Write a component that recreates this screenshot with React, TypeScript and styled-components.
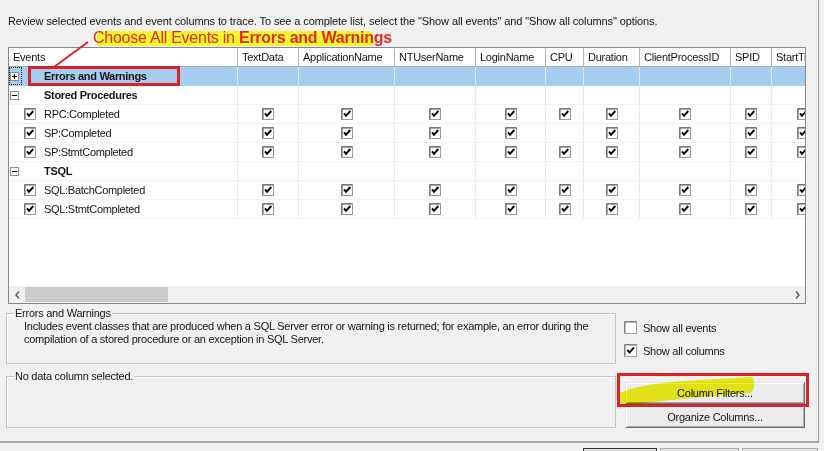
import React from 'react';
import styled, { createGlobalStyle } from 'styled-components';

const Global = createGlobalStyle`
  html, body { margin: 0; padding: 0; background: #f0f0f0; }
  body { font-family: "Liberation Sans", Arial, sans-serif; }
`;

const COLS = '229px 61px 96px 81px 70px 38px 56px 91px 41px 62px';

const Root = styled.div`
  position: relative;
  width: 824px;
  height: 451px;
  overflow: hidden;
  background: #f0f0f0;
  font-family: "Liberation Sans", Arial, sans-serif;
  font-size: 11px;
  letter-spacing: -0.25px;
  color: #141414;
`;

const Panel = styled.div`
  box-sizing: border-box;
  width: 819px;
  height: 443px;
  padding: 15px 0 0 8px;
  border-right: 1px solid #9c9c9c;
  border-bottom: 2px solid #a4a4a4;
  display: flex;
  flex-direction: column;
`;

const Intro = styled.div`
  height: 13px;
  line-height: 13px;
  white-space: nowrap;
  letter-spacing: -0.1px;
`;

const GridFrame = styled.div`
  margin-top: 19px;
  box-sizing: border-box;
  width: 798px;
  height: 257px;
  border: 1px solid #828790;
  background: #fff;
  display: flex;
  flex-direction: column;
  overflow: hidden;
  flex: none;
`;

const HeaderRow = styled.div`
  flex: none;
  display: grid;
  grid-template-columns: ${COLS};
  height: 19px;
  box-sizing: border-box;
  border-bottom: 1px solid #a9a9a9;
`;

const HeaderCell = styled.div`
  border-right: 1px solid #b4b4b4;
  padding-left: 4px;
  line-height: 18px;
  white-space: nowrap;
  overflow: hidden;
  background: #fff;
`;

const Body = styled.div`
  flex: 1;
  overflow: hidden;
`;

const Row = styled.div<{ $selected?: boolean }>`
  display: grid;
  grid-template-columns: ${COLS};
  height: 19px;
  box-sizing: border-box;
  border-bottom: 1px solid ${p => (p.$selected ? '#a5cdf0' : '#f1f1f1')};
  background: ${p => (p.$selected ? '#a5cdf0' : '#fff')};
`;

const Cell = styled.div<{ $center?: boolean }>`
  border-right: 1px solid #e8e8e8;
  display: flex;
  align-items: center;
  justify-content: ${p => (p.$center ? 'center' : 'flex-start')};
  overflow: hidden;
  white-space: nowrap;
`;

const Expander = styled.span<{ $focused?: boolean }>`
  flex: none;
  box-sizing: border-box;
  width: 13px;
  height: 18px;
  display: flex;
  align-items: center;
  border: 1px dotted ${p => (p.$focused ? '#222' : 'transparent')};
`;

const CheckSlot = styled.span`
  flex: none;
  display: flex;
  margin-left: 2px;
  width: 12px;
`;

const GroupGap = styled.span`
  flex: none;
  width: 22px;
`;

const EventLabel = styled.span<{ $bold?: boolean }>`
  margin-left: ${p => (p.$bold ? '0' : '8px')};
  font-weight: ${p => (p.$bold ? 700 : 400)};
  letter-spacing: -0.3px;
`;

const HScroll = styled.div`
  flex: none;
  height: 17px;
  display: flex;
  background: #f0f0f0;
`;

const ScrollArrow = styled.div`
  flex: none;
  width: 16px;
  height: 17px;
  display: flex;
  align-items: center;
  justify-content: center;
`;

const Track = styled.div`
  flex: 1;
  display: flex;
  align-items: center;
`;

const Thumb = styled.div<{ $w: number }>`
  width: ${p => p.$w}px;
  height: 15px;
  background: #cdcdcd;
`;

const Bottom = styled.div`
  display: grid;
  grid-template-columns: 610px 180px;
  column-gap: 9px;
  margin-left: -2px;
  margin-top: 3px;
`;

const LeftCol = styled.div`
  display: flex;
  flex-direction: column;
  gap: 6px;
`;

const Group = styled.fieldset<{ $h: number }>`
  margin: 0;
  min-width: 0;
  box-sizing: border-box;
  height: ${p => p.$h}px;
  border: 1px solid #c3c3c3;
  box-shadow: inset 1px 1px 0 #fff;
  padding: 0 6px 0 7px;
`;

const GroupTitle = styled.legend`
  padding: 0 1px;
  line-height: 13px;
`;

const Description = styled.div`
  margin-left: 10px;
  line-height: 13px;
  white-space: nowrap;
`;

const RightCol = styled.div`
  display: flex;
  flex-direction: column;
`;

const Option = styled.label<{ $top: number }>`
  display: flex;
  align-items: center;
  gap: 6px;
  height: 13px;
  margin-left: -1px;
  margin-top: ${p => p.$top}px;
`;

const Button = styled.button<{ $top: number }>`
  box-sizing: border-box;
  width: 180px;
  height: 22px;
  margin: ${p => p.$top}px 0 0 0;
  padding: 0;
  font-family: "Liberation Sans", Arial, sans-serif;
  font-size: 11px;
  letter-spacing: -0.25px;
  color: #141414;
  background: #ececec;
  border: 1px solid;
  border-color: #e4e4e4 #6f6f6f #6f6f6f #e4e4e4;
  box-shadow: inset 1px 1px 0 #fff, inset -1px -1px 0 #a9a9a9;
`;

const Footer = styled.div`
  display: flex;
  justify-content: flex-end;
  gap: 3px;
  padding: 5px 6px 0 0;
`;

const FooterButton = styled.div<{ $w: number; $default?: boolean }>`
  box-sizing: border-box;
  width: ${p => p.$w}px;
  height: 23px;
  background: #e1e1e1;
  border: 1px solid ${p => (p.$default ? '#333' : '#adadad')};
`;

const Callout = styled.div`
  position: absolute;
  z-index: 1;
  left: 93px;
  top: 29px;
  font-size: 16px;
  line-height: 18px;
  letter-spacing: -0.25px;
  color: #e22b1f;
  white-space: nowrap;
`;

const Highlight = styled.span`
  position: absolute;
  left: 4px;
  top: 2px;
  width: 277px;
  height: 15px;
  border-radius: 3px 6px 4px 2px;
  background: #f5f52c;
  z-index: -1;
`;

const CalloutText = styled.span`
  position: relative;
`;

const Strong = styled.b`
  font-weight: 700;
`;

const RedBox = styled.div<{ $x: number; $y: number; $w: number; $h: number; $b: number }>`
  position: absolute;
  z-index: 2;
  left: ${p => p.$x}px;
  top: ${p => p.$y}px;
  width: ${p => p.$w}px;
  height: ${p => p.$h}px;
  box-sizing: border-box;
  border: ${p => p.$b}px solid #dc2229;
  pointer-events: none;
`;

const Pointer = styled.svg`
  position: absolute;
  left: 52px;
  top: 40px;
  pointer-events: none;
  z-index: 2;
`;

const Marker = styled.svg`
  position: absolute;
  left: 612px;
  top: 372px;
  pointer-events: none;
  mix-blend-mode: multiply;
`;

const Check = ({ checked = true }: { checked?: boolean }) => (
  <svg width="12" height="12" viewBox="0 0 12 12">
    <rect x="0.5" y="0.5" width="11" height="11" fill="#fff" stroke="#9a9a9a" />
    <path d="M1 11 V1 H11" fill="none" stroke="#555" />
    {checked && <path d="M3 5.3 L5 7.8 L9.3 3" fill="none" stroke="#000" strokeWidth="1.9" />}
  </svg>
);

const BigCheck = ({ checked }: { checked: boolean }) => (
  <svg width="13" height="13" viewBox="0 0 13 13">
    <rect x="0.5" y="0.5" width="12" height="12" fill="#fff" stroke="#a0a0a0" />
    <path d="M1 12 V1 H12" fill="none" stroke="#6a6a6a" />
    {checked && <path d="M3.3 5.8 L5.5 8.5 L10 3.3" fill="none" stroke="#000" strokeWidth="1.9" />}
  </svg>
);

const ExpandBox = ({ open }: { open: boolean }) => (
  <svg width="9" height="9" viewBox="0 0 9 9">
    <rect x="0.5" y="0.5" width="8" height="8" fill="#fff" stroke="#8c8c8c" />
    <path d="M2 4.5 H7" stroke="#000" />
    {!open && <path d="M4.5 2 V7" stroke="#000" />}
  </svg>
);

const columns = ['Events', 'TextData', 'ApplicationName', 'NTUserName', 'LoginName', 'CPU', 'Duration', 'ClientProcessID', 'SPID', 'StartTime'];

type RowData =
  | { kind: 'group'; label: string; open: boolean; selected?: boolean }
  | { kind: 'event'; label: string; checks: boolean[] };

const all = [true, true, true, true, true, true, true, true, true];

const rows: RowData[] = [
  { kind: 'group', label: 'Errors and Warnings', open: false, selected: true },
  { kind: 'group', label: 'Stored Procedures', open: true },
  { kind: 'event', label: 'RPC:Completed', checks: all },
  { kind: 'event', label: 'SP:Completed', checks: [true, true, true, true, false, true, true, true, true] },
  { kind: 'event', label: 'SP:StmtCompleted', checks: all },
  { kind: 'group', label: 'TSQL', open: true },
  { kind: 'event', label: 'SQL:BatchCompleted', checks: all },
  { kind: 'event', label: 'SQL:StmtCompleted', checks: all },
];

export default function App() {
  return (
    <Root>
      <Global />
      <Panel>
        <Intro>
          Review selected events and event columns to trace. To see a complete list, select the "Show all events" and "Show all columns" options.
        </Intro>
        <GridFrame>
          <HeaderRow>
            {columns.map(c => (
              <HeaderCell key={c}>{c}</HeaderCell>
            ))}
          </HeaderRow>
          <Body>
            {rows.map((r, i) =>
              r.kind === 'group' ? (
                <Row key={i} $selected={r.selected}>
                  <Cell>
                    <Expander $focused={r.selected}>
                      <ExpandBox open={r.open} />
                    </Expander>
                    <GroupGap />
                    <EventLabel $bold>{r.label}</EventLabel>
                  </Cell>
                  {columns.slice(1).map(c => (
                    <Cell key={c} />
                  ))}
                </Row>
              ) : (
                <Row key={i}>
                  <Cell>
                    <Expander />
                    <CheckSlot>
                      <Check />
                    </CheckSlot>
                    <EventLabel>{r.label}</EventLabel>
                  </Cell>
                  {r.checks.map((on, j) => (
                    <Cell key={j} $center>
                      {on && <Check />}
                    </Cell>
                  ))}
                </Row>
              )
            )}
          </Body>
          <HScroll>
            <ScrollArrow>
              <svg width="5" height="8" viewBox="0 0 5 8">
                <path d="M4 0.5 L1 4 L4 7.5" fill="none" stroke="#555" strokeWidth="1.3" />
              </svg>
            </ScrollArrow>
            <Track>
              <Thumb $w={143} />
            </Track>
            <ScrollArrow>
              <svg width="5" height="8" viewBox="0 0 5 8">
                <path d="M1 0.5 L4 4 L1 7.5" fill="none" stroke="#555" strokeWidth="1.3" />
              </svg>
            </ScrollArrow>
          </HScroll>
        </GridFrame>
        <Bottom>
          <LeftCol>
            <Group $h={57}>
              <GroupTitle>Errors and Warnings</GroupTitle>
              <Description>
                Includes event classes that are produced when a SQL Server error or warning is returned; for example, an error during the
                <br />
                compilation of a stored procedure or an exception in SQL Server.
              </Description>
            </Group>
            <Group $h={58}>
              <GroupTitle>No data column selected.</GroupTitle>
            </Group>
          </LeftCol>
          <RightCol>
            <Option $top={14}>
              <BigCheck checked={false} />
              Show all events
            </Option>
            <Option $top={10}>
              <BigCheck checked />
              Show all columns
            </Option>
            <Button $top={25}>Column Filters...</Button>
            <Button $top={2}>Organize Columns...</Button>
          </RightCol>
        </Bottom>
      </Panel>
      <Footer>
        <FooterButton $w={74} $default />
        <FooterButton $w={79} />
        <FooterButton $w={76} />
      </Footer>

      <Callout>
        <Highlight />
        <CalloutText>
          Choose All Events in <Strong>Errors and Warnings</Strong>
        </CalloutText>
      </Callout>
      <Pointer width="40" height="30" viewBox="0 0 40 30">
        <path d="M36 2 L2 27" stroke="#dc2229" strokeWidth="2" />
      </Pointer>
      <Marker width="150" height="40" viewBox="0 0 150 40">
        <path
          d="M8 21 Q28 11 88 8 L140 5 Q145 13 139 21 L88 25 Q38 30 14 34 Q4 29 8 21 Z"
          fill="#f3f31c"
        />
      </Marker>
      <RedBox $x={28} $y={66} $w={152} $h={20} $b={3} />
      <RedBox $x={617} $y={373} $w={192} $h={34} $b={3} />
    </Root>
  );
}
